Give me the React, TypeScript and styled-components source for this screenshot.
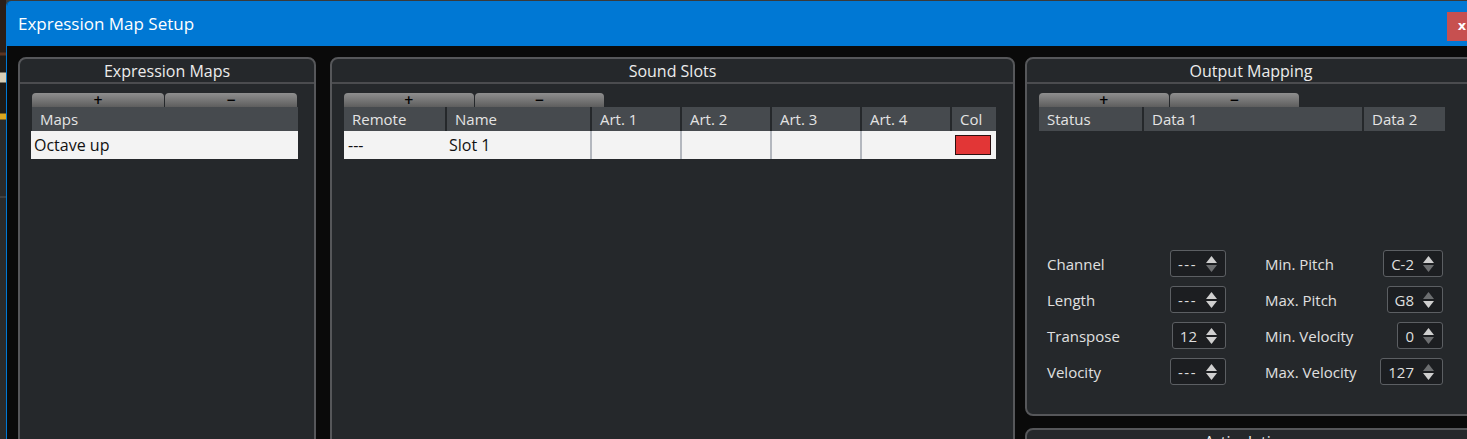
import React from "react";
import styled, { createGlobalStyle } from "styled-components";

const GlobalStyle = createGlobalStyle`
  html, body {
    margin: 0;
    padding: 0;
    background: #0a0a0a;
    overflow: hidden;
  }
  body {
    font-family: "Open Sans", "Noto Sans", "DejaVu Sans", sans-serif;
  }
`;

const Screen = styled.div`
  display: flex;
  width: 1467px;
  height: 439px;
  overflow: hidden;
  background: #3a3a3a;
`;

const Backdrop = styled.div`
  flex: none;
  width: 6px;
  background: linear-gradient(
    to bottom,
    #2a1e18 0px,
    #2a1e18 52px,
    #5a3422 53px,
    #5a3422 55px,
    #1d1a17 56px,
    #1d1a17 72px,
    #d8cfb8 73px,
    #d8cfb8 82px,
    #1d1a17 83px,
    #1d1a17 113px,
    #d9a520 114px,
    #d9a520 119px,
    #2a2a2a 120px,
    #2a2a2a 196px,
    #555 197px,
    #2a2a2a 198px
  );
`;

const Window = styled.div`
  flex: none;
  width: 1470px;
  margin-top: 1px;
  display: flex;
  flex-direction: column;
  border-left: 1px solid #0078d4;
  border-top-left-radius: 5px;
  overflow: hidden;
  background: #0a0a0a;
`;

const TitleBar = styled.div`
  height: 45px;
  flex: none;
  display: flex;
  align-items: flex-start;
  justify-content: space-between;
  background: #0078d4;
`;

const TitleText = styled.div`
  padding-left: 11px;
  line-height: 45px;
  font-size: 17px;
  color: #ffffff;
`;

const CloseButton = styled.div`
  margin-top: 11px;
  width: 30px;
  height: 29px;
  background: #c75050;
  color: #ffffff;
  font-family: "DejaVu Sans", sans-serif;
  font-weight: bold;
  font-size: 13px;
  line-height: 28px;
  text-align: center;
`;

const Body = styled.div`
  flex: 1;
  display: grid;
  grid-template-columns: 312px 695px 1fr;
  align-items: start;
  padding: 11px 0 0 11px;
`;

const Column = styled.div`
  display: flex;
  flex-direction: column;
  gap: 12px;
`;

const Panel = styled.div<{ $h: number; $w?: number }>`
  height: ${(p) => p.$h}px;
  width: ${(p) => (p.$w ? `${p.$w}px` : "auto")};
  box-sizing: border-box;
  display: flex;
  flex-direction: column;
  border: 2px solid #56575a;
  border-radius: 8px;
  background: #25282b;
`;

const PanelTitle = styled.div`
  flex: none;
  height: 23px;
  line-height: 24px;
  text-align: center;
  font-size: 16px;
  color: #ececec;
  border-bottom: 2px solid #4b4c4f;
`;

const PanelContent = styled.div`
  flex: 1;
  display: flex;
  flex-direction: column;
  align-items: flex-start;
  padding: 9px 12px 29px 12px;
`;

const ButtonBar = styled.div<{ $w: number }>`
  width: ${(p) => p.$w}px;
  display: grid;
  grid-template-columns: 1fr 1fr;
  column-gap: 1px;
`;

const BarButton = styled.div`
  height: 14px;
  border-radius: 4px 4px 0 0;
  background: linear-gradient(to bottom, #8f8f8f, #5e5e5e);
  color: #000;
  font-family: "DejaVu Sans", sans-serif;
  font-weight: bold;
  font-size: 12px;
  line-height: 14px;
  text-align: center;
`;

const HeaderRow = styled.div<{ $cols: string; $gap: number }>`
  display: grid;
  grid-template-columns: ${(p) => p.$cols};
  column-gap: ${(p) => p.$gap}px;
`;

const HeaderCell = styled.div`
  height: 24px;
  line-height: 24px;
  padding-left: 8px;
  background: #464a4e;
  color: #e4e4e4;
  font-size: 15px;
  white-space: nowrap;
  overflow: hidden;
`;

const DataRow = styled.div<{ $cols: string; $gap: number; $shift?: number }>`
  display: grid;
  grid-template-columns: ${(p) => p.$cols};
  column-gap: ${(p) => p.$gap}px;
  margin-left: ${(p) => p.$shift ?? 0}px;
  height: 28px;
  background: #f3f3f3;
`;

const DataCell = styled.div<{ $sep?: boolean; $pad?: number }>`
  display: flex;
  align-items: center;
  padding-left: ${(p) => p.$pad ?? 3}px;
  color: #111;
  font-size: 16px;
  white-space: nowrap;
  ${(p) =>
    p.$sep
      ? `border-left: 2px solid #b3b7be; margin-left: -2px;`
      : ``}
`;

const Swatch = styled.div`
  width: 34px;
  height: 18px;
  background: #e23636;
  border: 1px solid #2a1010;
`;

const FormGrid = styled.div`
  margin-top: auto;
  margin-left: 8px;
  display: grid;
  grid-template-columns: 179px 178px;
  column-gap: 39px;
  row-gap: 9px;
`;

const Field = styled.div`
  display: flex;
  align-items: center;
  justify-content: space-between;
  height: 27px;
`;

const FieldLabel = styled.div`
  font-size: 15px;
  color: #e0e0e0;
`;

const Spin = styled.div`
  height: 27px;
  box-sizing: border-box;
  display: flex;
  align-items: center;
  gap: 9px;
  padding: 0 8px 0 7px;
  border: 1px solid #5c5f63;
  border-radius: 3px;
  background: #1c1e21;
`;

const SpinValue = styled.div<{ $dash: boolean }>`
  font-size: 15px;
  color: #dedede;
  letter-spacing: ${(p) => (p.$dash ? "1.5px" : "0")};
`;

const Arrows = styled.div`
  display: flex;
  flex-direction: column;
  gap: 2px;
`;

const Arrow: React.FC<{ up?: boolean; on: boolean }> = ({ up, on }) => (
  <svg width="11" height="7" viewBox="0 0 11 7">
    <polygon
      points={up ? "5.5,0 11,7 0,7" : "0,0 11,0 5.5,7"}
      fill={on ? "#cfcfcf" : "#6c6e70"}
    />
  </svg>
);

type SpinData = { label: string; value: string; up: boolean; down: boolean };

const SpinField: React.FC<SpinData> = ({ label, value, up, down }) => (
  <Field>
    <FieldLabel>{label}</FieldLabel>
    <Spin>
      <SpinValue $dash={value === "---"}>{value}</SpinValue>
      <Arrows>
        <Arrow up on={up} />
        <Arrow on={down} />
      </Arrows>
    </Spin>
  </Field>
);

const fields: SpinData[] = [
  { label: "Channel", value: "---", up: true, down: false },
  { label: "Min. Pitch", value: "C-2", up: true, down: false },
  { label: "Length", value: "---", up: true, down: true },
  { label: "Max. Pitch", value: "G8", up: false, down: true },
  { label: "Transpose", value: "12", up: true, down: true },
  { label: "Min. Velocity", value: "0", up: true, down: false },
  { label: "Velocity", value: "---", up: true, down: true },
  { label: "Max. Velocity", value: "127", up: false, down: true },
];

const slotCols = "101px 143px 88px 88px 88px 88px 44px";
const outCols = "103px 218px 81px";

export default function App() {
  return (
    <>
      <GlobalStyle />
      <Screen>
        <Backdrop />
        <Window>
          <TitleBar>
            <TitleText>Expression Map Setup</TitleText>
            <CloseButton>x</CloseButton>
          </TitleBar>
          <Body>
            <Panel $h={420} $w={298}>
              <PanelTitle>Expression Maps</PanelTitle>
              <PanelContent>
                <ButtonBar $w={265}>
                  <BarButton>+</BarButton>
                  <BarButton>−</BarButton>
                </ButtonBar>
                <HeaderRow $cols="266px" $gap={0}>
                  <HeaderCell>Maps</HeaderCell>
                </HeaderRow>
                <DataRow $cols="267px" $gap={0} $shift={-1}>
                  <DataCell>Octave up</DataCell>
                </DataRow>
              </PanelContent>
            </Panel>

            <Panel $h={420} $w={685}>
              <PanelTitle>Sound Slots</PanelTitle>
              <PanelContent>
                <ButtonBar $w={260}>
                  <BarButton>+</BarButton>
                  <BarButton>−</BarButton>
                </ButtonBar>
                <HeaderRow $cols={slotCols} $gap={2}>
                  {["Remote", "Name", "Art. 1", "Art. 2", "Art. 3", "Art. 4", "Col"].map(
                    (h) => (
                      <HeaderCell key={h}>{h}</HeaderCell>
                    )
                  )}
                </HeaderRow>
                <DataRow $cols={slotCols} $gap={2}>
                  <DataCell $pad={4}>---</DataCell>
                  <DataCell $pad={2}>Slot 1</DataCell>
                  <DataCell $sep />
                  <DataCell $sep />
                  <DataCell $sep />
                  <DataCell $sep />
                  <DataCell $pad={3}>
                    <Swatch />
                  </DataCell>
                </DataRow>
              </PanelContent>
            </Panel>

            <Column>
              <Panel $h={359}>
                <PanelTitle>Output Mapping</PanelTitle>
                <PanelContent>
                  <ButtonBar $w={260}>
                    <BarButton>+</BarButton>
                    <BarButton>−</BarButton>
                  </ButtonBar>
                  <HeaderRow $cols={outCols} $gap={2}>
                    <HeaderCell>Status</HeaderCell>
                    <HeaderCell>Data 1</HeaderCell>
                    <HeaderCell>Data 2</HeaderCell>
                  </HeaderRow>
                  <FormGrid>
                    {fields.map((f) => (
                      <SpinField key={f.label} {...f} />
                    ))}
                  </FormGrid>
                </PanelContent>
              </Panel>
              <Panel $h={200}>
                <PanelTitle>Articulations</PanelTitle>
              </Panel>
            </Column>
          </Body>
        </Window>
      </Screen>
    </>
  );
}
